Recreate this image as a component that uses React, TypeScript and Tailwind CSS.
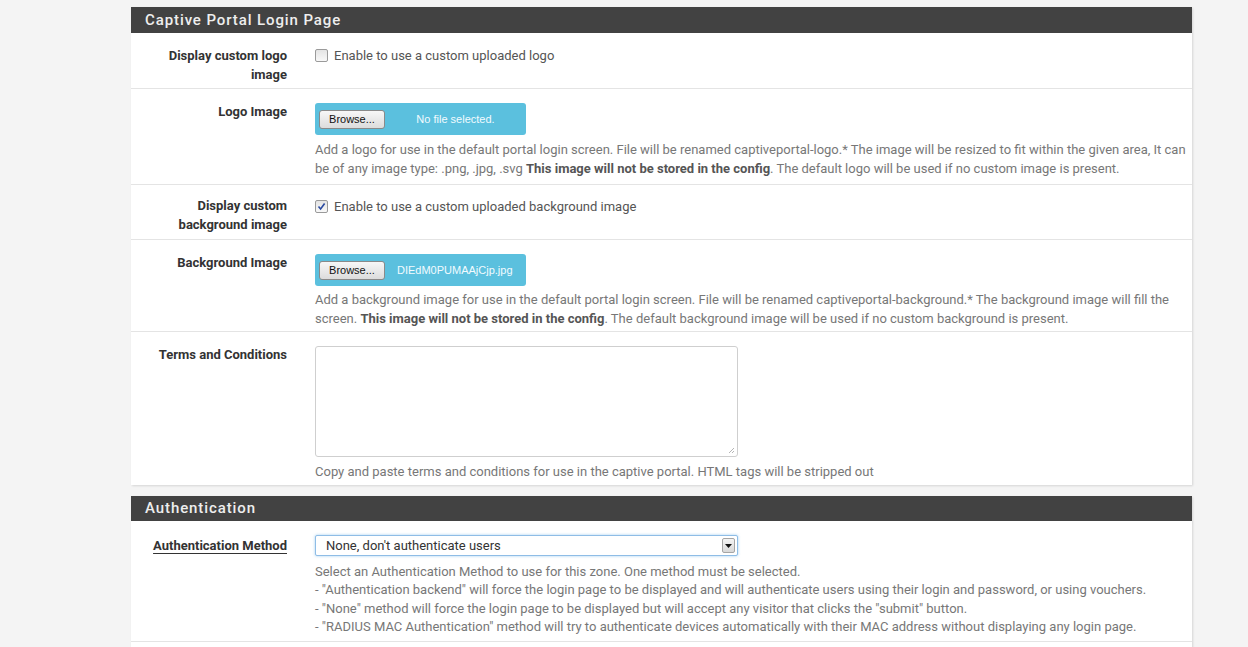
import React from "react";

const font = { fontFamily: "Roboto, 'Liberation Sans', sans-serif" };

function Label({ children, underline, pt = "pt-[13px]" }: { children: React.ReactNode; underline?: boolean; pt?: string }) {
  return (
    <div className={`w-[171px] shrink-0 pl-[10px] pr-[15px] ${pt} text-right text-[13px] font-bold leading-[19px] text-[#333]`}>
      {underline ? <span className="underline decoration-[#333] underline-offset-[3px]">{children}</span> : children}
    </div>
  );
}

function Checkbox({ checked }: { checked?: boolean }) {
  return (
    <span className="mr-[6px] mt-[3px] inline-flex h-[13px] w-[13px] shrink-0 items-center justify-center rounded-[2px] border border-[#9a9a9a] bg-gradient-to-b from-[#e4e4e4] to-[#f8f8f8]">
      {checked ? (
        <svg width="9" height="9" viewBox="0 0 9 9">
          <path d="M1.5 4.5 L3.6 7 L7.6 1.5" stroke="#2a4aa0" strokeWidth="1.6" fill="none" />
        </svg>
      ) : null}
    </span>
  );
}

function FileBox({ center }: { center?: boolean }) {
  return (
    <div className="flex h-[32px] w-[211px] items-center rounded-[3px] bg-[#5bc0de] pl-[4px]">
      <span
        className="flex h-[19px] w-[66px] items-center justify-center rounded-[3px] border border-[#8a8a8a] bg-gradient-to-b from-[#f7f7f7] to-[#dcdcdc] text-[11px] text-[#111]"
        style={{ fontFamily: "'Liberation Sans', Arial, sans-serif" }}
      >
        Browse...
      </span>
      {center ? (
        <span className="flex-1 text-center text-[11px] text-[#f2fbfe]" style={{ fontFamily: "'Liberation Sans', Arial, sans-serif" }}>
          No file selected.
        </span>
      ) : (
        <span className="ml-[12px] text-[11px] text-[#f2fbfe]" style={{ fontFamily: "'Liberation Sans', Arial, sans-serif" }}>
          DIEdM0PUMAAjCjp.jpg
        </span>
      )}
    </div>
  );
}

function Header({ title, h }: { title: string; h: string }) {
  return (
    <div className={`flex ${h} items-center bg-[#424242] pl-[14px] text-[15px] font-medium tracking-[0.9px] text-[#eeeeee]`}>
      {title}
    </div>
  );
}

export default function App() {
  return (
    <div className="h-[647px] w-full overflow-hidden bg-[#f4f4f4]" style={font}>
      <div className="ml-[131px] w-[1061px] pt-[7px]">
        {/* Panel 1 */}
        <div className="bg-white shadow-[1px_1px_2px_rgba(0,0,0,0.12)]">
          <Header title="Captive Portal Login Page" h="h-[26px]" />

          <div className="flex h-[56px] border-b border-[#e4e4e4]">
            <Label>
              Display custom logo
              <br />
              image
            </Label>
            <div className="flex flex-1 items-start pl-[13px] pt-[13px] text-[13px] leading-[19px] text-[#555]">
              <Checkbox />
              Enable to use a custom uploaded logo
            </div>
          </div>

          <div className="flex h-[96px] border-b border-[#e4e4e4]">
            <Label>Logo Image</Label>
            <div className="flex-1 pl-[13px] pr-[12px] pt-[14px]">
              <FileBox center />
              <p className="mt-[5px] whitespace-nowrap text-[13px] leading-[19px] text-[#777]">
                Add a logo for use in the default portal login screen. File will be renamed captiveportal-logo.* The image will be resized to fit within the given area, It can
                <br />
                be of any image type: .png, .jpg, .svg <b className="text-[#555]">This image will not be stored in the config</b>. The default logo will be used if no custom image is present.
              </p>
            </div>
          </div>

          <div className="flex h-[55px] border-b border-[#e4e4e4]">
            <Label pt="pt-[11px]">
              Display custom
              <br />
              background image
            </Label>
            <div className="flex flex-1 items-start pl-[13px] pt-[12px] text-[13px] leading-[19px] text-[#555]">
              <Checkbox checked />
              Enable to use a custom uploaded background image
            </div>
          </div>

          <div className="flex h-[92px] border-b border-[#e4e4e4]">
            <Label>Background Image</Label>
            <div className="flex-1 pl-[13px] pr-[12px] pt-[14px]">
              <FileBox />
              <p className="mt-[4px] whitespace-nowrap text-[13px] leading-[19px] text-[#777]">
                Add a background image for use in the default portal login screen. File will be renamed captiveportal-background.* The background image will fill the
                <br />
                screen. <b className="text-[#555]">This image will not be stored in the config</b>. The default background image will be used if no custom background is present.
              </p>
            </div>
          </div>

          <div className="flex h-[153px]">
            <Label>Terms and Conditions</Label>
            <div className="flex-1 pl-[13px] pr-[12px] pt-[14px]">
              <div className="relative h-[111px] w-[423px] rounded-[3px] border border-[#cfcfcf] bg-white">
                <svg className="absolute bottom-[2px] right-[2px]" width="7" height="7" viewBox="0 0 7 7">
                  <path d="M6 1 L1 6 M6 4 L4 6" stroke="#b5b5b5" strokeWidth="1" />
                </svg>
              </div>
              <p className="mt-[5px] text-[13px] leading-[19px] text-[#777]">
                Copy and paste terms and conditions for use in the captive portal. HTML tags will be stripped out
              </p>
            </div>
          </div>
        </div>

        {/* Panel 2 */}
        <div className="mt-[11px] bg-white shadow-[1px_1px_2px_rgba(0,0,0,0.12)]">
          <Header title="Authentication" h="h-[25px]" />
          <div className="flex h-[121px] border-b border-[#e4e4e4]">
            <Label underline pt="pt-[15px]">Authentication Method</Label>
            <div className="flex-1 pl-[13px] pr-[12px] pt-[14px]">
              <div className="flex h-[21px] w-[423px] items-center justify-between rounded-[2px] border border-[#8fbde6] bg-white pl-[10px] pr-[2px] text-[13px] text-[#333] shadow-[0_0_3px_rgba(102,175,233,0.6)]">
                <span>None, don't authenticate users</span>
                <span className="flex h-[15px] w-[13px] items-center justify-center rounded-[2px] border border-[#a5a5a5] bg-gradient-to-b from-[#f4f4f4] to-[#d8d8d8]">
                  <svg width="7" height="4" viewBox="0 0 7 4">
                    <path d="M0 0 L7 0 L3.5 4 Z" fill="#111" />
                  </svg>
                </span>
              </div>
              <div className="mt-[7px] whitespace-nowrap text-[13px] leading-[18.4px] text-[#777]">
                <div>Select an Authentication Method to use for this zone. One method must be selected.</div>
                <div>- "Authentication backend" will force the login page to be displayed and will authenticate users using their login and password, or using vouchers.</div>
                <div>- "None" method will force the login page to be displayed but will accept any visitor that clicks the "submit" button.</div>
                <div>- "RADIUS MAC Authentication" method will try to authenticate devices automatically with their MAC address without displaying any login page.</div>
              </div>
            </div>
          </div>
          <div className="h-[20px]" />
        </div>
      </div>
    </div>
  );
}
